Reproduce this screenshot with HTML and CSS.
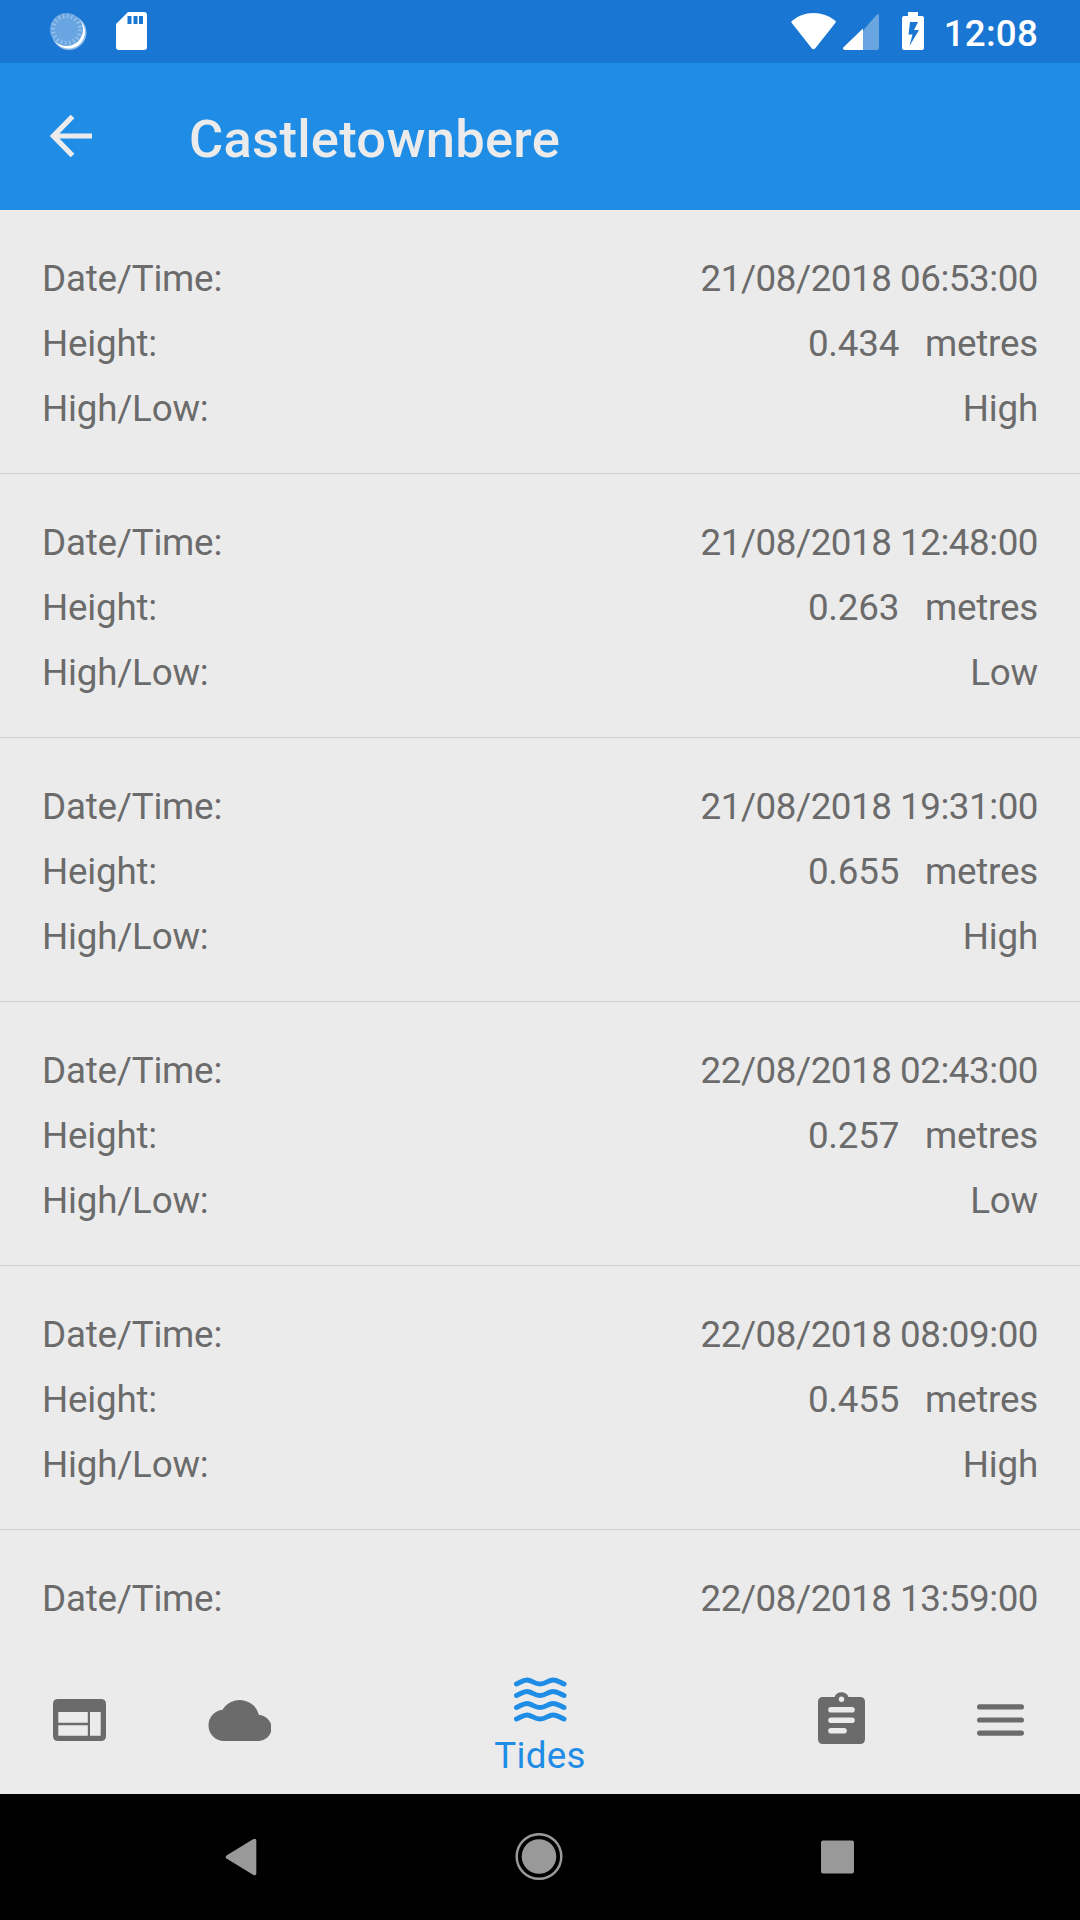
FILE: index.html
```
<!doctype html>
<html lang="en">
<head>
	<meta charset="UTF-8">
	<title>Castletownbere</title>

	<link rel="stylesheet" href="styles.css">
</head>
<body>

	<div class="screen">
		<!-- status bar -->
		<div class="status">
			<svg class="sync" width="38" height="40" viewBox="0 0 38 40">
				<circle cx="19" cy="20.500" r="17.500" fill="#8dbbe9"/>
				<circle cx="18.500" cy="20" r="16.500" fill="#fff"/>
				<circle cx="16.500" cy="17.500" r="16.500" fill="#69a6e1"/>
				<circle cx="16.500" cy="17.500" r="13.500" fill="none" stroke="#97c1eb" stroke-width="4" stroke-dasharray="1.5 2.740"/>
			</svg>
			<svg width="31" height="39" viewBox="0 0 31 39">
				<path fill="#fff" fill-rule="evenodd" d="M12 0h16q3 0 3 3v32q0 3-3 3H3q-3 0-3-3V12zM11.500 4v8h4V4zM17.500 4v8h4V4zM23 4v8h4V4z"/>
			</svg>
			<div class="status-right">
				<svg width="46" height="37" viewBox="0 0 46 37">
					<path fill="#fff" d="M1.500 7.500Q10 0 22.500 0T44 7.500q1.500 1 .3 2.500L24.500 35q-2 2.500-4 0L.8 10q-1.200-1.500.7-2.500z"/>
				</svg>
				<svg class="signal" width="36" height="37" viewBox="0 0 36 37">
					<path fill="#69a6e1" d="M20 17.500L33 2.500Q36 0 36 3v32q0 2-2 2H20z"/>
					<path fill="#fff" d="M20 15.500V37H2q-3-.5-1.500-2.700z"/>
				</svg>
				<svg class="battery" width="22" height="38" viewBox="0 0 22 38">
					<path fill="#fff" fill-rule="evenodd" d="M6 0h10v4h4q2 0 2 2v30q0 2-2 2H2q-2 0-2-2V6q0-2 2-2h4zM8 10L6.500 22.500h4L7.500 34 17 18h-5l4-8z"/>
				</svg>
				<span class="clock">12:08</span>
			</div>
		</div>

		<!-- toolbar -->
		<div class="toolbar">
			<svg width="42" height="42" viewBox="0 0 42 42">
				<path d="M42 21H4M22.500 1.500L3.500 21 22.500 40.500" fill="none" stroke="#ebebeb" stroke-width="5.200"/>
			</svg>
			<h1 class="title">Castletownbere</h1>
		</div>

		<!-- tide list -->
		<div class="list">
			<div class="item">
				<div class="row"><span>Date/Time:</span><span class="date">21/08/2018 06:53:00</span></div>
				<div class="row"><span>Height:</span><span>0.434 <span class="unit">metres</span></span></div>
				<div class="row"><span>High/Low:</span><span>High</span></div>
			</div>
			<div class="item">
				<div class="row"><span>Date/Time:</span><span class="date">21/08/2018 12:48:00</span></div>
				<div class="row"><span>Height:</span><span>0.263 <span class="unit">metres</span></span></div>
				<div class="row"><span>High/Low:</span><span>Low</span></div>
			</div>
			<div class="item">
				<div class="row"><span>Date/Time:</span><span class="date">21/08/2018 19:31:00</span></div>
				<div class="row"><span>Height:</span><span>0.655 <span class="unit">metres</span></span></div>
				<div class="row"><span>High/Low:</span><span>High</span></div>
			</div>
			<div class="item">
				<div class="row"><span>Date/Time:</span><span class="date">22/08/2018 02:43:00</span></div>
				<div class="row"><span>Height:</span><span>0.257 <span class="unit">metres</span></span></div>
				<div class="row"><span>High/Low:</span><span>Low</span></div>
			</div>
			<div class="item">
				<div class="row"><span>Date/Time:</span><span class="date">22/08/2018 08:09:00</span></div>
				<div class="row"><span>Height:</span><span>0.455 <span class="unit">metres</span></span></div>
				<div class="row"><span>High/Low:</span><span>High</span></div>
			</div>
			<div class="item">
				<div class="row"><span>Date/Time:</span><span class="date">22/08/2018 13:59:00</span></div>
			</div>
		</div>

		<!-- tabs -->
		<div class="tabs">
			<div class="tab">
				<svg width="53" height="42" viewBox="0 0 53 42">
					<path fill="#6b6b6b" fill-rule="evenodd" d="M5 0h43q5 0 5 5v32q0 5-5 5H5q-5 0-5-5V5q0-5 5-5zM5.300 13v10.700h29.500V13zM5.300 26.200v10.500h29.500V26.200zM37 13v23.700h10.700V13z"/>
				</svg>
			</div>
			<div class="tab">
				<svg width="63" height="42" viewBox="0 0 63 42">
					<path fill="#6b6b6b" d="M15.700 42A15.700 15.700 0 0 1 14.500 10.700 20 20 0 0 1 51 16 13 13 0 0 1 50 42z"/>
				</svg>
			</div>
			<div class="tab tab-active">
				<svg width="54" height="46" viewBox="0 0 54 46">
					<g fill="none" stroke="#1f8ce6" stroke-width="5" stroke-linecap="round">
						<path d="M3.500 7C8 5 10 3 14 3 19 3 21 7 27 7S35 3 40 3C44 3 46 5 51 7"/>
						<path d="M3.500 18.500C8 16.500 10 14.500 14 14.500 19 14.500 21 18.500 27 18.500S35 14.500 40 14.500C44 14.500 46 16.500 51 18.500"/>
						<path d="M3.500 30.500C8 28.500 10 26.500 14 26.500 19 26.500 21 30.500 27 30.500S35 26.500 40 26.500C44 26.500 46 28.500 51 30.500"/>
						<path d="M3.500 42C8 40 10 38 14 38 19 38 21 42 27 42S35 38 40 38C44 38 46 40 51 42"/>
					</g>
				</svg>
				<span class="label">Tides</span>
			</div>
			<div class="tab">
				<svg class="clipboard" width="47" height="53" viewBox="0 0 47 53">
					<path fill="#6b6b6b" d="M5 6h11.500a7.600 7.600 0 0 1 14 0H42q5 0 5 5v37q0 5-5 5H5q-5 0-5-5V11q0-5 5-5z"/>
					<circle cx="23.500" cy="8.300" r="2.700" fill="#ebebeb"/>
					<path d="M13 18.700h21M13 29.200h21M13 39.700h13" stroke="#ebebeb" stroke-width="5.600" stroke-linecap="round"/>
				</svg>
			</div>
			<div class="tab">
				<svg width="47" height="32" viewBox="0 0 47 32">
					<path d="M2.600 2.900h41.800M2.600 16h41.800M2.600 29.100h41.800" stroke="#6b6b6b" stroke-width="5.200" stroke-linecap="round"/>
				</svg>
			</div>
		</div>

		<!-- system buttons -->
		<div class="system">
			<div class="button">
				<svg width="48" height="48" viewBox="0 0 48 48"><path fill="#999" d="M9.500 22.500L36 6.300q3.300-1.500 3.300 1.200v33q0 2.700-3.300 1.200L9.500 25.500q-1.800-1.500 0-3z"/></svg>
			</div>
			<div class="button">
				<svg width="48" height="48" viewBox="0 0 48 48"><circle cx="24" cy="23.500" r="22.300" fill="none" stroke="#999" stroke-width="2.500"/><circle cx="24" cy="23.500" r="17.300" fill="#999"/></svg>
			</div>
			<div class="button">
				<svg width="48" height="48" viewBox="0 0 48 48"><rect x="7" y="7.500" width="33" height="33" rx="2" fill="#999"/></svg>
			</div>
		</div>
	</div>

</body>
</html>
```
FILE: styles.css
```
* {margin: 0; padding: 0; box-sizing: border-box;}
body {font: normal 36.75px/65px Roboto, sans-serif; color: #6b6b6b; background-color: #ebebeb;}
svg {display: block; flex: none;}
.screen {width: 1080px; height: 1920px; display: flex; flex-direction: column; overflow: hidden;}

.status {height: 63px; flex: none; display: flex; align-items: flex-start; padding: 12px 42px 0 50px; background-color: #1976d2; color: #fff;}
.status .sync {margin-right: 28px;}
.status-right {display: flex; margin-left: auto;}
.status-right svg {margin-top: 1px;}
.status-right .signal {margin-left: 6px;}
.status-right .battery {margin: 0 20px 0 23px;}
.status .clock {font-weight: 500; line-height: 43px; letter-spacing: .2px;}

.toolbar {height: 147px; flex: none; display: flex; align-items: center; padding-left: 50px; background-color: #1f8ce6;}
.toolbar svg {margin-top: -1px;}
.toolbar .title {margin: 5px 0 0 97px; font-size: 52.5px; font-weight: 500; letter-spacing: .27px; color: #ebebeb;}

.list {flex: 1; min-height: 0; overflow: hidden;}
.item {padding: 36px 42px 32px; border-bottom: 1px solid #d0d0d0;}
.item:last-child {border-bottom: 0;}
.row {display: flex; justify-content: space-between; letter-spacing: -.22px;}
.row .date {letter-spacing: -.47px;}
.row .unit {margin-left: 17px;}

.tabs {height: 147px; flex: none; display: grid; grid-template-columns: 159px 160px 1fr 160px 159px;}
.tab {display: flex; flex-direction: column; align-items: center; justify-content: center; padding-bottom: 1px;}
.tab .clipboard {margin-top: -5px;}
.tab-active {justify-content: flex-start; padding: 30px 0 0; color: #1f8ce6;}
.tab-active .label {line-height: 43px; margin-top: 11px; letter-spacing: .25px;}

.system {height: 126px; flex: none; display: flex; justify-content: center; padding-right: 2px; background-color: #000;}
.button {width: 298.5px; display: flex; align-items: center; justify-content: center;}
```
